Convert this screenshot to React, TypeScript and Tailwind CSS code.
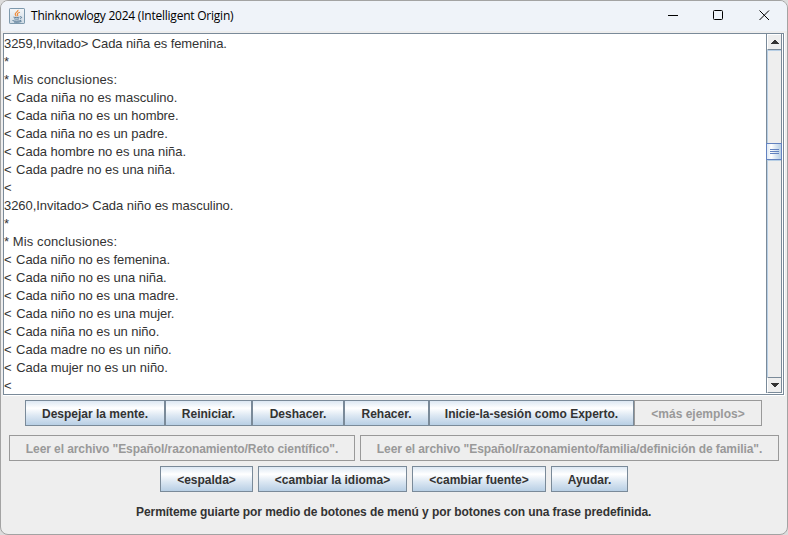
const PROMPT = 'tracking-[-0.1px]';
const NOTE = 'tracking-[0.1px]';
const REPLY = 'tracking-[0.03px]';

const LINES: [string, string][] = [
  ['3259,Invitado> Cada niña es femenina.', PROMPT],
  ['*', NOTE],
  ['* Mis conclusiones:', NOTE],
  ['< Cada niña no es masculino.', REPLY],
  ['< Cada niña no es un hombre.', 'tracking-[-0.06px]'],
  ['< Cada niña no es un padre.', 'tracking-[-0.06px]'],
  ['< Cada hombre no es una niña.', 'tracking-[-0.05px]'],
  ['< Cada padre no es una niña.', 'tracking-[-0.05px]'],
  ['<', REPLY],
  ['3260,Invitado> Cada niño es masculino.', 'tracking-[-0.06px]'],
  ['*', NOTE],
  ['* Mis conclusiones:', NOTE],
  ['< Cada niño no es femenina.', 'tracking-[-0.06px]'],
  ['< Cada niño no es una niña.', 'tracking-[-0.05px]'],
  ['< Cada niño no es una madre.', 'tracking-[-0.06px]'],
  ['< Cada niño no es una mujer.', 'tracking-[-0.03px]'],
  ['< Cada niña no es un niño.', 'tracking-[-0.06px]'],
  ['< Cada madre no es un niño.', 'tracking-[-0.05px]'],
  ['< Cada mujer no es un niño.', 'tracking-[-0.03px]'],
  ['<', REPLY],
];

function Button({ label, width, disabled = false, tracking = '' }: { label: string; width: string; disabled?: boolean; tracking?: string }) {
  const skin = disabled
    ? 'border-[#999999] text-[#999999] bg-[#eeeeee]'
    : 'border-[#7a8a99] text-[#333333] bg-[linear-gradient(180deg,#dde8f3_0%,#ffffff_30%,#dde8f3_60%,#b8cfe5_100%)]';
  return (
    <button disabled={disabled} className={`flex h-[26px] shrink-0 items-center justify-center border pt-0.5 whitespace-nowrap ${width} ${skin} ${tracking}`}>
      {label}
    </button>
  );
}

function JavaIcon() {
  return (
    <svg className="h-4 w-4 shrink-0" viewBox="0 0 16 16" fill="none">
      <defs>
        <linearGradient id="tile" x1="0" y1="0" x2="0" y2="1">
          <stop offset="0" stopColor="#f4f6f8" />
          <stop offset="1" stopColor="#cfdbe5" />
        </linearGradient>
      </defs>
      <rect x=".5" y=".5" width="15" height="15" rx=".6" fill="url(#tile)" stroke="#7d99ad" />
      <path d="M9 1.8C9.5 3.9 5.6 4.3 6.2 6.3c.2.8.9 1.2 1.1 2M10.8 4.2C8.4 5 7.8 5.9 8.6 6.9c.4.5.2.9-.1 1.3" stroke="#ee8732" strokeWidth="1.1" />
      <path d="M4.5 9.1c1.3.6 4.4.5 6 0M5.2 10.8c1.4.5 3.6.5 4.9 0M11 8.8c2.2-.5 2 1.500.1 2M3.5 12.5c1.5.9 6.8.9 8.7-.1M5 14c2.4.5 5.5.3 7.5-.6" stroke="#4f7391" strokeWidth=".9" />
    </svg>
  );
}

function ScrollBar() {
  return (
    <div className="mr-px flex w-4 shrink-0 flex-col border-x border-[#7a8a99] bg-[#eeeeee]">
      <div className="flex h-4 items-center justify-center border-t border-b border-l border-t-white border-b-[#7a8a99] border-l-white">
        <svg className="h-1 w-2" viewBox="0 0 8 4" shapeRendering="crispEdges" fill="#333333"><path d="M3 0h2v1h1v1h1v1h1v1H0V3h1V2h1V1h1z" /></svg>
      </div>
      <div className="h-[93px] border-t border-l border-[#b8cfe5]" />
      <div className="-mx-px flex h-[17px] flex-col items-center justify-center gap-px border border-[#6382bf] bg-[linear-gradient(90deg,#dde8f3_0%,#ffffff_30%,#dde8f3_60%,#b8cfe5_100%)]">
        <div className="h-px w-[9px] bg-[#6382bf]" />
        <div className="h-px w-[9px] bg-[#6382bf]" />
        <div className="h-px w-[9px] bg-[#6382bf]" />
      </div>
      <div className="flex-1 border-t border-l border-[#b8cfe5]" />
      <div className="flex h-4 items-center justify-center border-y border-l border-[#7a8a99] border-l-white">
        <svg className="h-1 w-2" viewBox="0 0 8 4" shapeRendering="crispEdges" fill="#333333"><path d="M0 0h8v1H7v1H6v1H5v1H3V3H2V2H1V1H0z" /></svg>
      </div>
      <div className="-mx-px h-px bg-white" />
    </div>
  );
}

export default function App() {
  return (
    <div className="h-[535px] w-[788px] bg-[#dcdcdc]">
      <div className="flex h-[535px] w-[788px] flex-col overflow-hidden rounded-lg border border-[#a3a3a3] bg-[#eeeeee] font-['Liberation_Sans',Arial,sans-serif]">
        <header className="flex h-[30px] shrink-0 items-center bg-[#eff3f9] pl-2 text-black">
          <JavaIcon />
          <h1 className="ml-[6px] font-['Open_Sans','Noto_Sans',sans-serif] text-[12px] tracking-[-0.23px] whitespace-nowrap">Thinknowlogy 2024 (Intelligent Origin)</h1>
          <div className="mr-[17px] ml-auto flex items-center gap-[35px] pb-px">
            <svg className="h-[11px] w-[11px]" viewBox="0 0 11 11" stroke="currentColor"><path d="M1 5.5h10" /></svg>
            <svg className="h-[11px] w-[11px]" viewBox="0 0 11 11" stroke="currentColor" fill="none"><rect x=".5" y=".5" width="9" height="9" rx="1" /></svg>
            <svg className="h-[11px] w-[11px]" viewBox="0 0 11 11" stroke="currentColor"><path d="M.5.5l9.500 9.500M10 .5L.5 10" /></svg>
          </div>
        </header>
        <section className="mt-[2px] ml-[2px] flex h-[363px] w-[782px] shrink-0 border-r border-b border-white">
          <div className="flex w-[781px] overflow-hidden border border-[#7a8a99] bg-white">
            <div className="min-w-0 flex-1 pt-px">
              {LINES.map(([line, tracking], i) => (
                <div key={i} className={`h-[18px] text-[13px] leading-[18px] whitespace-pre text-[#333333] ${tracking}`}>
                  {line.startsWith('< ') ? <><span className="mr-px">{'<'}</span>{line.slice(1)}</> : line}
                </div>
              ))}
            </div>
            <ScrollBar />
          </div>
        </section>
        <main className="flex flex-col text-[12px] font-bold text-[#333333]">
          <div className="mt-1 ml-6 flex">
            <Button label="Despejar la mente." width="w-[140px]" />
            <Button label="Reiniciar." width="w-[87px]" />
            <Button label="Deshacer." width="w-[92px]" />
            <Button label="Rehacer." width="w-[85px]" />
            <Button label="Inicie-la-sesión como Experto." width="w-[205px]" />
            <Button label="<más ejemplos>" width="w-[128px]" disabled />
          </div>
          <div className="mt-[9px] ml-2 flex gap-[5px]">
            <Button label={'Leer el archivo "Español/razonamiento/Reto científico".'} width="w-[346px]" tracking="tracking-[-0.08px]" disabled />
            <Button label={'Leer el archivo "Español/razonamiento/familia/definición de familia".'} width="w-[419px]" tracking="tracking-[-0.08px]" disabled />
          </div>
          <div className="mt-[5px] ml-[159px] flex gap-[5px]">
            <Button label="<espalda>" width="w-[93px]" />
            <Button label="<cambiar la idioma>" width="w-[149px]" />
            <Button label="<cambiar fuente>" width="w-[134px]" />
            <Button label="Ayudar." width="w-[77px]" />
          </div>
          <p className="mt-3 ml-[135px] leading-4 tracking-[-0.07px] whitespace-nowrap">Permíteme guiarte por medio de botones de menú y por botones con una frase predefinida.</p>
        </main>
      </div>
    </div>
  );
}
